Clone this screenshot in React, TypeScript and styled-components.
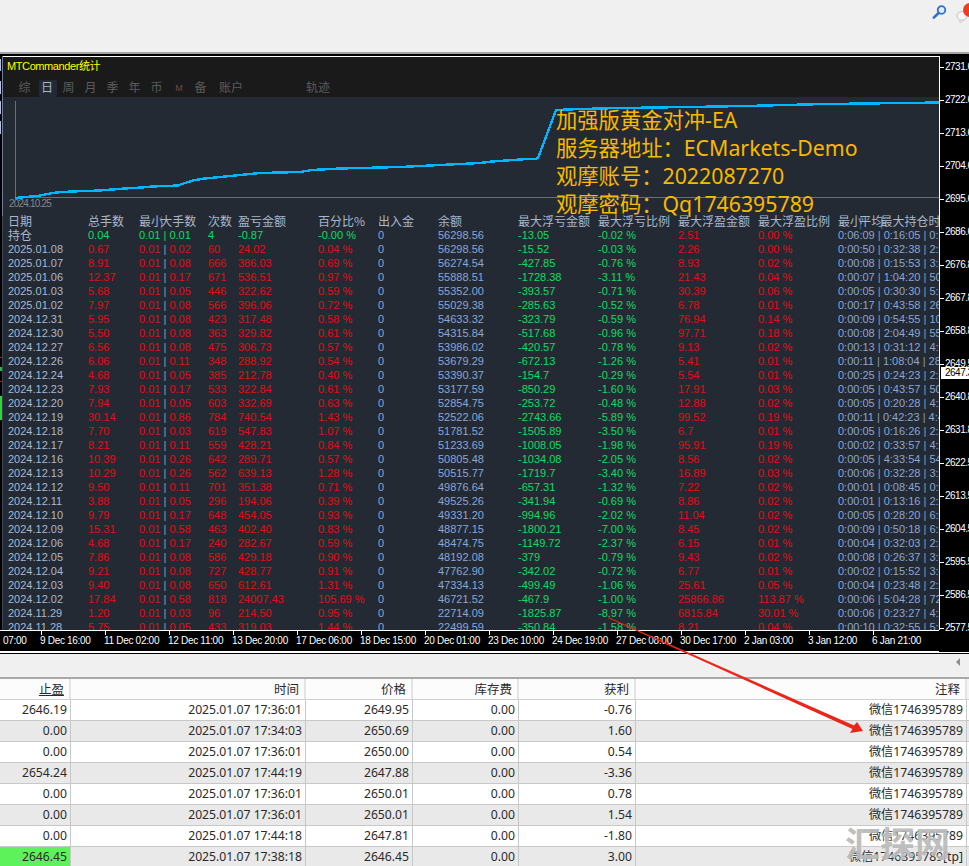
import React from 'react';
import styled, { createGlobalStyle } from 'styled-components';

const GlobalStyle = createGlobalStyle`
  html, body {
    margin: 0;
    padding: 0;
    background: #f0f0f0;
  }
`;

const Page = styled.div`
  position: relative;
  width: 969px;
  height: 866px;
  overflow: hidden;
  display: flex;
  flex-direction: column;
  font-family: 'Liberation Sans', 'Noto Sans CJK SC', sans-serif;
`;

const TopBar = styled.div`
  height: 52px;
  flex: none;
  background: #f0f0f0;
  border-bottom: 2px solid #a3a3a3;
  display: flex;
  justify-content: flex-end;
  align-items: flex-start;
`;

const Frame = styled.div`
  flex: none;
  height: 595px;
  background: #000;
  border-top: 2px solid #000;
  display: grid;
  grid-template-columns: 3px 936px 30px;
`;

const LeftStrip = styled.svg`
  display: block;
  width: 3px;
  height: 595px;
`;

const MainColumn = styled.div`
  display: flex;
  flex-direction: column;
  min-width: 0;
`;

const ChartWindow = styled.div`
  position: relative;
  height: 573px;
  flex: none;
  overflow: hidden;
  border-top: 1px solid #fff;
  background: #232a33;
`;

const TitleBar = styled.div`
  height: 40px;
  background: #1a1a1a;
  padding-left: 4px;
  display: flex;
  flex-direction: column;
`;

const Title = styled.div`
  height: 18px;
  line-height: 18px;
  font-size: 11px;
  letter-spacing: -0.4px;
  color: #ffff00;
`;

const Tabs = styled.div`
  display: flex;
  margin-top: 5px;
  padding-left: 7px;
  height: 17px;
`;

const Tab = styled.div<{ $active?: boolean; $width: number; $small?: boolean; $nudge?: number }>`
  width: ${(p) => p.$width}px;
  flex: none;
  box-sizing: border-box;
  padding-right: ${(p) => p.$nudge ?? 0}px;
  height: 17px;
  line-height: 17px;
  font-size: ${(p) => (p.$small ? 9 : 12)}px;
  text-align: center;
  border-radius: 2px;
  color: ${(p) => (p.$active ? '#a9b6c6' : p.$small ? '#6a4a4a' : '#5c5c5c')};
  background: ${(p) => (p.$active ? '#232a33' : 'transparent')};
`;

const ChartBody = styled.div`
  position: relative;
  height: 117px;
  flex: none;
`;

const LineChart = styled.svg`
  display: block;
  width: 936px;
  height: 117px;
`;

const StartDate = styled.div`
  position: absolute;
  left: 6px;
  bottom: 4px;
  font-size: 10px;
  letter-spacing: -0.8px;
  line-height: 12px;
  color: #82878e;
`;

const Promo = styled.div`
  position: absolute;
  left: 553px;
  top: 9px;
  z-index: 2;
  color: #f7b900;
  font-family: 'Noto Sans', 'Noto Sans CJK SC', sans-serif;
  font-size: 21.3px;
  line-height: 28px;
  white-space: nowrap;
`;

const Stats = styled.div`
  padding-left: 5px;
  font-size: 11px;
`;

const StatRow = styled.div`
  display: grid;
  grid-template-columns: 80px 51px 69px 30px 80px 60px 60px 80px 80px 80px 80px 80px 160px;
  height: 14px;
  line-height: 14px;
  white-space: nowrap;
`;

const toneColor = {
  head: '#a9b7cb',
  date: '#a9b8d0',
  red: '#e20d14',
  green: '#0fdc64',
  blue: '#8aa6d6',
} as const;

type Tone = keyof typeof toneColor;

const StatCell = styled.div<{ $tone: Tone }>`
  color: ${(p) => toneColor[p.$tone]};
`;

const HeadCell = styled(StatCell)`
  font-size: 12px;
  font-family: 'Noto Sans CJK SC', sans-serif;
`;

const Pipe = styled.span<{ $strong?: boolean }>`
  color: ${(p) => (p.$strong ? '#3b78c4' : '#8d9cb2')};
  margin: ${(p) => (p.$strong ? '0 -3px' : '0')};
`;

const TimeAxis = styled.div`
  height: 21px;
  flex: none;
  border-top: 1px solid #fff;
  margin-left: -3px;
  width: 939px;
  background: #000;
  display: flex;
  overflow: hidden;
`;

const TimeLabel = styled.div<{ $width: number; $tick?: boolean }>`
  position: relative;
  flex: none;
  width: ${(p) => p.$width}px;
  padding: 3px 0 0 ${(p) => (p.$tick ? 0 : 3)}px;
  box-sizing: border-box;
  color: #fff;
  font-size: 10px;
  letter-spacing: -0.3px;
  line-height: 14px;
  white-space: nowrap;

  &::before {
    content: '';
    display: ${(p) => (p.$tick ? 'block' : 'none')};
    position: absolute;
    left: 1px;
    top: 0;
    width: 1px;
    height: 4px;
    background: #fff;
  }
`;

const PriceAxis = styled.div`
  position: relative;
  background: linear-gradient(#fff, #fff) left top / 1px 574px no-repeat #000;
  padding-top: 4px;
  overflow: hidden;
`;

const PriceLabel = styled.div`
  position: relative;
  height: 33px;
  padding-left: 6px;
  color: #fff;
  font-size: 10px;
  letter-spacing: -0.5px;
  line-height: 14px;
  white-space: nowrap;

  &::before {
    content: '';
    position: absolute;
    left: 1px;
    top: 7px;
    width: 4px;
    height: 1px;
    background: #fff;
  }
`;

const CurrentPrice = styled.div`
  position: absolute;
  left: 2px;
  top: 311px;
  width: 28px;
  height: 12px;
  padding-left: 4px;
  background: #fff;
  color: #000;
  font-size: 10px;
  letter-spacing: -0.5px;
  line-height: 12px;
  white-space: nowrap;
  overflow: hidden;
`;

const Divider = styled.div`
  flex: none;
  height: 2px;
  background: #fff;
  border-bottom: 1px solid #000;
`;

const Toolbar = styled.div`
  flex: none;
  height: 19px;
  background: #f0f0f0;
  border-bottom: 2px solid #a8a8a8;
  display: flex;
  justify-content: flex-end;
  align-items: flex-start;
  padding: 4px 9px 0 0;
`;

const CollapseArrow = styled.div`
  width: 0;
  height: 0;
  border-top: 4px solid transparent;
  border-bottom: 4px solid transparent;
  border-right: 4px solid #8e8e8e;
`;

const Table = styled.div`
  flex: 1;
  background: #fff;
  font-family: 'Noto Sans', 'Noto Sans CJK SC', sans-serif;
  font-size: 12.2px;
  color: #2a2a2a;
`;

const tableColumns = '71px 235px 107px 106px 117px 331px 2px';

const HeadRow = styled.div`
  display: grid;
  grid-template-columns: ${tableColumns};
  height: 20px;
  border-bottom: 1px solid #cfcfcf;
  background: #f4f4f4;
`;

const HeadTitle = styled.div<{ $sorted?: boolean }>`
  text-align: right;
  padding-right: 5px;
  line-height: 20px;
  background: #fcfcfc;
  border-right: 2px solid #e4e4e4;
  font-family: 'Noto Sans CJK SC', sans-serif;
  font-size: 12.5px;
  text-decoration: ${(p) => (p.$sorted ? 'underline' : 'none')};
`;

const BodyRow = styled.div<{ $even: boolean }>`
  display: grid;
  grid-template-columns: ${tableColumns};
  height: 20px;
  border-bottom: 1px solid #c8c8c8;
  background: ${(p) => (p.$even ? '#e9e9e9' : '#fff')};
`;

const BodyCell = styled.div<{ $hit?: boolean }>`
  text-align: right;
  padding-right: 3px;
  line-height: 20px;
  white-space: nowrap;
  border-right: 1px solid #c8c8c8;
  background: ${(p) => (p.$hit ? '#5ef25a' : 'transparent')};
`;

const Watermark = styled.div`
  position: absolute;
  left: 845px;
  top: 819px;
  font-family: 'Noto Sans CJK SC', sans-serif;
  font-size: 35px;
  font-weight: 700;
  line-height: 46px;
  color: rgba(170, 170, 170, 0.75);
  text-shadow: 0 0 2px rgba(255, 255, 255, 0.8);
  white-space: nowrap;
`;

const ArrowOverlay = styled.svg`
  position: absolute;
  left: 0;
  top: 0;
  width: 969px;
  height: 866px;
  pointer-events: none;
`;

const IconRow = styled.svg`
  display: block;
  width: 40px;
  height: 30px;
`;

// columns: date, total, max lot, count, profit, pct, balance, max loss, loss pct, max float, float pct, hold times
const rows: string[][] = [
  ['2025.01.08', '0.67', '0.02', '60', '24.02', '0.04', '56298.56', '-15.52', '-0.03', '2.26', '0.00', '0:00:50', '0:32:38', '2:5'],
  ['2025.01.07', '8.91', '0.08', '666', '386.03', '0.69', '56274.54', '-427.85', '-0.76', '8.93', '0.02', '0:00:08', '0:15:53', '3:4'],
  ['2025.01.06', '12.37', '0.17', '671', '536.51', '0.97', '55888.51', '-1728.38', '-3.11', '21.43', '0.04', '0:00:07', '1:04:20', '50'],
  ['2025.01.03', '5.68', '0.05', '446', '322.62', '0.59', '55352.00', '-393.57', '-0.71', '30.39', '0.06', '0:00:05', '0:30:30', '5:4'],
  ['2025.01.02', '7.97', '0.08', '566', '396.06', '0.72', '55029.38', '-285.63', '-0.52', '6.78', '0.01', '0:00:17', '0:43:58', '26'],
  ['2024.12.31', '5.95', '0.08', '423', '317.48', '0.58', '54633.32', '-323.79', '-0.59', '76.94', '0.14', '0:00:09', '0:54:55', '10'],
  ['2024.12.30', '5.50', '0.08', '363', '329.82', '0.61', '54315.84', '-517.68', '-0.96', '97.71', '0.18', '0:00:08', '2:04:49', '55'],
  ['2024.12.27', '6.56', '0.08', '475', '306.73', '0.57', '53986.02', '-420.57', '-0.78', '9.13', '0.02', '0:00:13', '0:31:12', '4:1'],
  ['2024.12.26', '6.06', '0.11', '348', '288.92', '0.54', '53679.29', '-672.13', '-1.26', '5.41', '0.01', '0:00:11', '1:08:04', '28'],
  ['2024.12.24', '4.68', '0.05', '385', '212.78', '0.40', '53390.37', '-154.7', '-0.29', '5.54', '0.01', '0:00:25', '0:24:23', '2:4'],
  ['2024.12.23', '7.93', '0.17', '533', '322.84', '0.61', '53177.59', '-850.29', '-1.60', '17.91', '0.03', '0:00:05', '0:43:57', '50'],
  ['2024.12.20', '7.94', '0.05', '603', '332.69', '0.63', '52854.75', '-253.72', '-0.48', '12.88', '0.02', '0:00:05', '0:20:28', '4:2'],
  ['2024.12.19', '30.14', '0.86', '784', '740.54', '1.43', '52522.06', '-2743.66', '-5.89', '99.52', '0.19', '0:00:11', '0:42:23', '4:4'],
  ['2024.12.18', '7.70', '0.03', '619', '547.83', '1.07', '51781.52', '-1505.89', '-3.50', '6.7', '0.01', '0:00:05', '0:16:26', '2:2'],
  ['2024.12.17', '8.21', '0.11', '559', '428.21', '0.84', '51233.69', '-1008.05', '-1.98', '95.91', '0.19', '0:00:02', '0:33:57', '4:2'],
  ['2024.12.16', '10.39', '0.26', '642', '289.71', '0.57', '50805.48', '-1034.08', '-2.05', '8.56', '0.02', '0:00:05', '4:33:54', '54'],
  ['2024.12.13', '10.29', '0.26', '562', '639.13', '1.28', '50515.77', '-1719.7', '-3.40', '16.89', '0.03', '0:00:06', '0:32:28', '3:3'],
  ['2024.12.12', '9.50', '0.11', '701', '351.38', '0.71', '49876.64', '-657.31', '-1.32', '7.22', '0.02', '0:00:01', '0:08:45', '0:5'],
  ['2024.12.11', '3.88', '0.05', '296', '194.06', '0.39', '49525.26', '-341.94', '-0.69', '8.86', '0.02', '0:00:01', '0:13:16', '2:2'],
  ['2024.12.10', '9.79', '0.17', '648', '454.05', '0.93', '49331.20', '-994.96', '-2.02', '11.04', '0.02', '0:00:05', '0:28:20', '6:0'],
  ['2024.12.09', '15.31', '0.58', '463', '402.40', '0.83', '48877.15', '-1800.21', '-7.00', '8.45', '0.02', '0:00:09', '0:50:18', '6:5'],
  ['2024.12.06', '4.68', '0.17', '240', '282.67', '0.59', '48474.75', '-1149.72', '-2.37', '6.15', '0.01', '0:00:04', '0:32:03', '2:4'],
  ['2024.12.05', '7.86', '0.08', '586', '429.18', '0.90', '48192.08', '-379', '-0.79', '9.43', '0.02', '0:00:08', '0:26:37', '3:4'],
  ['2024.12.04', '9.21', '0.08', '727', '428.77', '0.91', '47762.90', '-342.02', '-0.72', '6.77', '0.01', '0:00:02', '0:15:52', '3:4'],
  ['2024.12.03', '9.40', '0.08', '650', '612.61', '1.31', '47334.13', '-499.49', '-1.06', '25.61', '0.05', '0:00:04', '0:23:48', '2:5'],
  ['2024.12.02', '17.84', '0.58', '818', '24007.43', '105.69', '46721.52', '-467.9', '-1.00', '25866.86', '113.87', '0:00:06', '5:04:28', '72'],
  ['2024.11.29', '1.20', '0.03', '96', '214.50', '0.95', '22714.09', '-1825.87', '-8.97', '6815.84', '30.01', '0:00:06', '0:23:27', '4:2'],
  ['2024.11.28', '5.75', '0.05', '433', '319.03', '1.44', '22499.59', '-350.84', '-1.58', '8.21', '0.04', '0:00:10', '0:32:55', '5:2'],
];

const tabs = [
  { label: '综', width: 25, nudge: 4 },
  { label: '日', width: 18, nudge: 2, active: true },
  { label: '周', width: 23 },
  { label: '月', width: 21 },
  { label: '季', width: 23 },
  { label: '年', width: 21 },
  { label: '币', width: 23 },
  { label: 'M', width: 22, small: true },
  { label: '备', width: 21 },
  { label: '账户', width: 40 },
  { label: '', width: 53 },
  { label: '轨迹', width: 28 },
];

const timeLabels = [
  '9 Dec 16:00', '11 Dec 02:00', '12 Dec 11:00', '13 Dec 20:00', '17 Dec 06:00', '18 Dec 15:00', '20 Dec 01:00',
  '23 Dec 10:00', '24 Dec 19:00', '27 Dec 08:00', '30 Dec 17:00', '2 Jan 03:00', '3 Jan 12:00', '6 Jan 21:00',
];

const prices = [
  '2731.6', '2722.6', '2713.6', '2704.6', '2695.6', '2686.6', '2676.8', '2667.8', '2658.8',
  '2649.5', '2640.8', '2631.8', '2622.5', '2613.5', '2604.5', '2595.5', '2586.5', '2577.5',
];

const trades = [
  ['2646.19', '2025.01.07 17:36:01', '2649.95', '0.00', '-0.76', '微信1746395789'],
  ['0.00', '2025.01.07 17:34:03', '2650.69', '0.00', '1.60', '微信1746395789'],
  ['0.00', '2025.01.07 17:36:01', '2650.00', '0.00', '0.54', '微信1746395789'],
  ['2654.24', '2025.01.07 17:44:19', '2647.88', '0.00', '-3.36', '微信1746395789'],
  ['0.00', '2025.01.07 17:36:01', '2650.01', '0.00', '0.78', '微信1746395789'],
  ['0.00', '2025.01.07 17:36:01', '2650.01', '0.00', '1.54', '微信1746395789'],
  ['0.00', '2025.01.07 17:44:18', '2647.81', '0.00', '-1.80', '微信1746395789'],
  ['2646.45', '2025.01.07 17:38:18', '2646.45', '0.00', '3.00', '微信1746395789[tp]'],
];

const heads = ['止盈', '时间', '价格', '库存费', '获利', '注释'];

// equity curve in chart coordinates (origin at the chart's top left)
const curve =
  '12,101 23,100 35,99 42,97.5 49,96 59,95 69,94.5 97,93.5 109,92.5 122,91.5 139,90.5 149,89.5 175,88.5 179,87 185,85 192,83 202,81.5 222,79.5 237,78 257,76 297,75 309,73 337,71.5 397,70 427,68.5 477,66 489,64.5 524,62 533,61.7 535,61 553,13 577,12 617,11 687,10 742,9 782,8 822,7 902,6 936,5.5';

const Row = ({ row }: { row: string[] }) => (
  <StatRow>
    <StatCell $tone="date">{row[0]}</StatCell>
    <StatCell $tone="red">{row[1]}</StatCell>
    <StatCell $tone="red">
      0.01 <Pipe>|</Pipe> {row[2]}
    </StatCell>
    <StatCell $tone="red">{row[3]}</StatCell>
    <StatCell $tone="red">{row[4]}</StatCell>
    <StatCell $tone="red">{row[5]} %</StatCell>
    <StatCell $tone="blue">0</StatCell>
    <StatCell $tone="blue">{row[6]}</StatCell>
    <StatCell $tone="green">{row[7]}</StatCell>
    <StatCell $tone="green">{row[8]} %</StatCell>
    <StatCell $tone="red">{row[9]}</StatCell>
    <StatCell $tone="red">{row[10]} %</StatCell>
    <StatCell $tone="blue">
      {row[11]} <Pipe>|</Pipe> {row[12]} <Pipe>|</Pipe> {row[13]}
    </StatCell>
  </StatRow>
);

const App = () => {
  return (
    <Page>
      <GlobalStyle />
      <TopBar>
        <IconRow viewBox="0 0 40 30">
          <circle cx="12.5" cy="10" r="3.8" fill="#dfeafa" stroke="#2f6fd0" strokeWidth="1.8" />
          <path d="M9.6 13 L4.8 17.6" stroke="#2f6fd0" strokeWidth="2.6" strokeLinecap="round" />
          <ellipse cx="33" cy="16" rx="5" ry="4.5" fill="#f6f6f6" stroke="#c4c4c4" />
          <path d="M31 20 L31 23 L35 20 Z" fill="#e6e6e6" stroke="#c4c4c4" strokeWidth="0.6" />
          <circle cx="41" cy="10" r="7" fill="#e8401c" />
        </IconRow>
      </TopBar>
      <Frame>
        <LeftStrip viewBox="0 0 3 595">
          <rect x="2" y="0" width="1" height="160" fill="#6f7f9c" />
          <rect x="0" y="3" width="1" height="12" fill="#b4c2de" />
          <rect x="0" y="25" width="1" height="13" fill="#b4c2de" />
          <rect x="0" y="45" width="1" height="13" fill="#b4c2de" />
          <rect x="0" y="65" width="1" height="13" fill="#b4c2de" />
          <rect x="0" y="301" width="2" height="1" fill="#c01818" />
          <rect x="0" y="311" width="2" height="4" fill="#20c040" />
          <rect x="0" y="325" width="2" height="1" fill="#c01818" />
          <rect x="0" y="340" width="2" height="24" fill="#2fd63a" />
          <rect x="2" y="160" width="1" height="414" fill="#39424f" />
        </LeftStrip>
        <MainColumn>
          <ChartWindow>
            <TitleBar>
              <Title>MTCommander统计</Title>
              <Tabs>
                {tabs.map((t, i) => (
                  <Tab key={i} $width={t.width} $active={t.active} $small={t.small} $nudge={t.nudge}>
                    {t.label}
                  </Tab>
                ))}
              </Tabs>
            </TitleBar>
            <ChartBody>
              <LineChart viewBox="0 0 936 117">
                <path d="M12.5 4 V100.5 H936" fill="none" stroke="#6d6f72" strokeWidth="1" />
                <polyline points={curve} fill="none" stroke="#00b7ff" strokeWidth="2.4" shapeRendering="crispEdges" />
              </LineChart>
              <StartDate>2024.10.25</StartDate>
              <Promo>
                加强版黄金对冲-EA
                <br />
                服务器地址：ECMarkets-Demo
                <br />
                观摩账号：2022087270
                <br />
                观摩密码：Qq1746395789
              </Promo>
            </ChartBody>
            <Stats>
              <StatRow>
                <HeadCell $tone="head">日期</HeadCell>
                <HeadCell $tone="head">总手数</HeadCell>
                <HeadCell $tone="head">
                  最小<Pipe $strong>|</Pipe>大手数
                </HeadCell>
                <HeadCell $tone="head">次数</HeadCell>
                <HeadCell $tone="head">盈亏金额</HeadCell>
                <HeadCell $tone="head">百分比%</HeadCell>
                <HeadCell $tone="head">出入金</HeadCell>
                <HeadCell $tone="head">余额</HeadCell>
                <HeadCell $tone="head">最大浮亏金额</HeadCell>
                <HeadCell $tone="head">最大浮亏比例</HeadCell>
                <HeadCell $tone="head">最大浮盈金额</HeadCell>
                <HeadCell $tone="head">最大浮盈比例</HeadCell>
                <HeadCell $tone="head">
                  最小<Pipe $strong>|</Pipe>平均<Pipe $strong>|</Pipe>最大持仓时
                </HeadCell>
              </StatRow>
              <StatRow>
                <HeadCell $tone="head">持仓</HeadCell>
                <StatCell $tone="green">0.04</StatCell>
                <StatCell $tone="green">0.01 | 0.01</StatCell>
                <StatCell $tone="green">4</StatCell>
                <StatCell $tone="green">-0.87</StatCell>
                <StatCell $tone="green">-0.00 %</StatCell>
                <StatCell $tone="blue">0</StatCell>
                <StatCell $tone="blue">56298.56</StatCell>
                <StatCell $tone="green">-13.05</StatCell>
                <StatCell $tone="green">-0.02 %</StatCell>
                <StatCell $tone="red">2.51</StatCell>
                <StatCell $tone="red">0.00 %</StatCell>
                <StatCell $tone="blue">
                  0:06:09 <Pipe>|</Pipe> 0:16:05 <Pipe>|</Pipe> 0:3
                </StatCell>
              </StatRow>
              {rows.map((r) => (
                <Row key={r[0]} row={r} />
              ))}
            </Stats>
          </ChartWindow>
          <TimeAxis>
            <TimeLabel $width={40}>07:00</TimeLabel>
            {timeLabels.map((t) => (
              <TimeLabel key={t} $width={64} $tick>
                {t}
              </TimeLabel>
            ))}
          </TimeAxis>
        </MainColumn>
        <PriceAxis>
          {prices.map((p) => (
            <PriceLabel key={p}>{p}</PriceLabel>
          ))}
          <CurrentPrice>2647.3</CurrentPrice>
        </PriceAxis>
      </Frame>
      <Divider />
      <Toolbar>
        <CollapseArrow />
      </Toolbar>
      <Table>
        <HeadRow>
          {heads.map((h, i) => (
            <HeadTitle key={h} $sorted={i === 0}>
              {h}
            </HeadTitle>
          ))}
        </HeadRow>
        {trades.map((t, i) => (
          <BodyRow key={i} $even={i % 2 === 1}>
            {t.map((c, j) => (
              <BodyCell key={j} $hit={i === 7 && j === 0}>
                {c}
              </BodyCell>
            ))}
          </BodyRow>
        ))}
      </Table>
      <Watermark>汇探网</Watermark>
      <ArrowOverlay viewBox="0 0 969 866">
        <polygon points="608,617 854,725.5 857,722 863,731 850,733 852.5,729 608,618" fill="#ee2418" />
      </ArrowOverlay>
    </Page>
  );
};

export default App;
